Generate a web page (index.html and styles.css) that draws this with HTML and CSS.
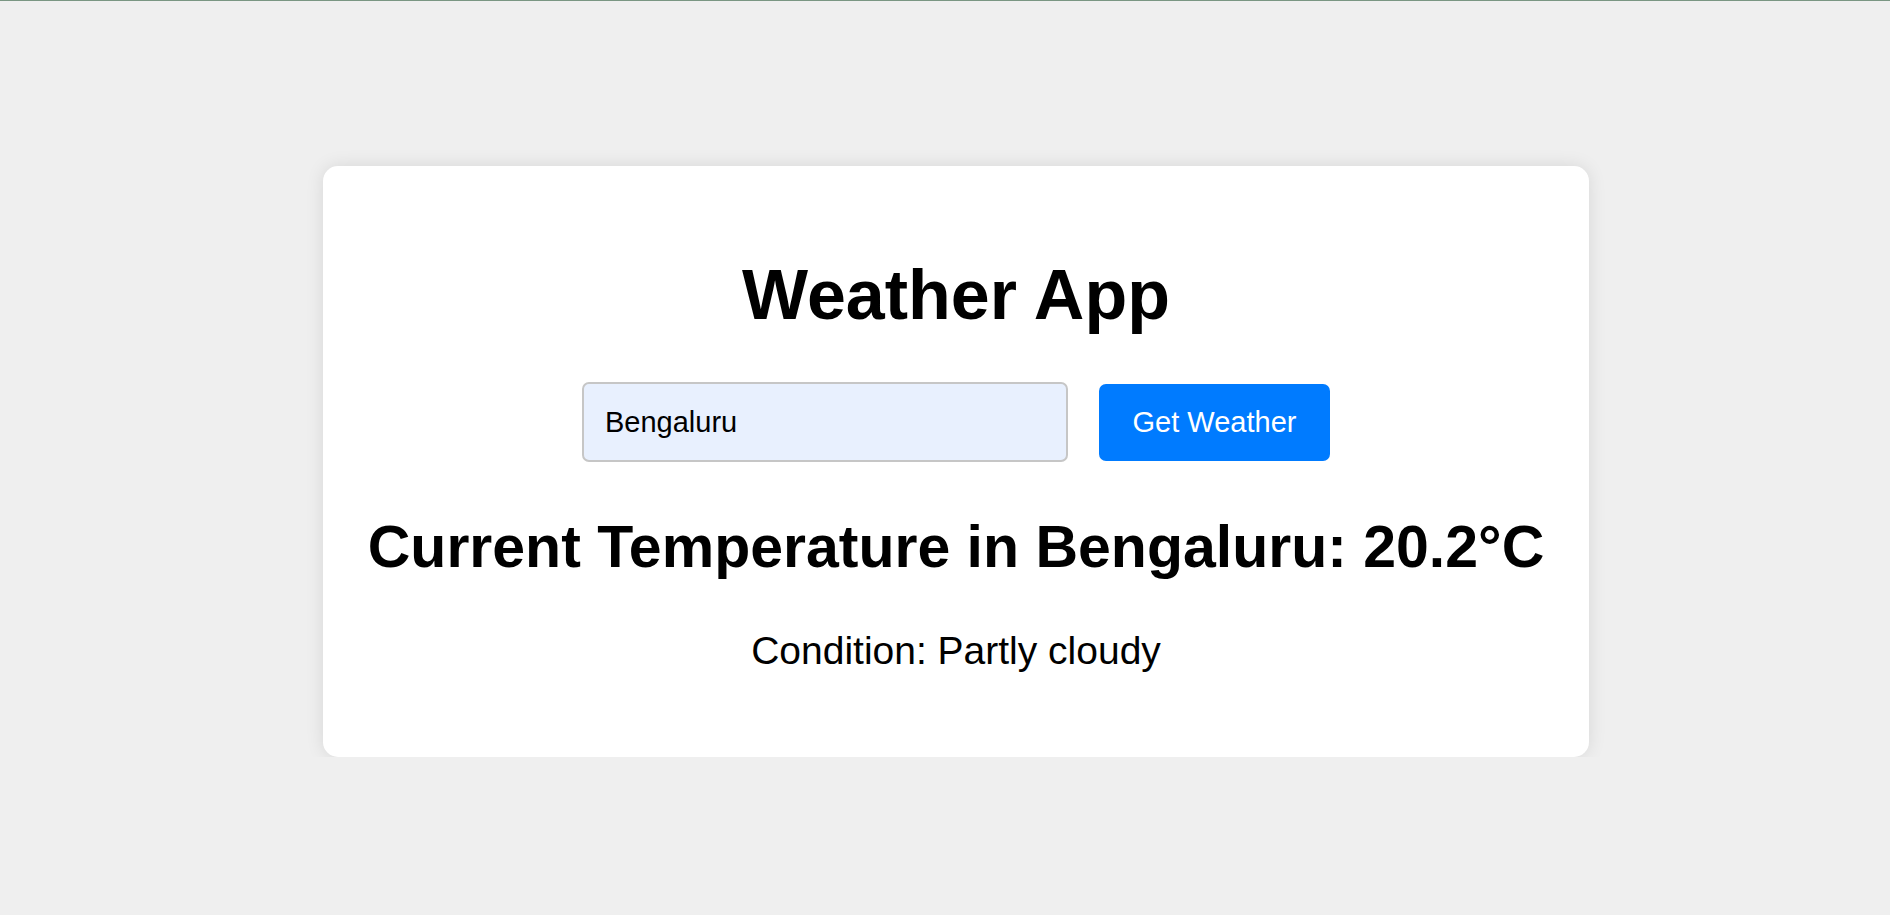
FILE: index.html
```html
<!DOCTYPE html>
<html lang="en">
<head>
<meta charset="utf-8">
<title>Weather App</title>
<link rel="stylesheet" href="styles.css">
</head>
<body>
<main class="page">
  <section class="card">
    <h1 class="title">Weather App</h1>
    <div class="search-row">
      <input class="city-input" type="text" value="Bengaluru">
      <button class="get-btn" type="button">Get Weather</button>
    </div>
    <h2 class="temp">Current Temperature in Bengaluru: 20.2°C</h2>
    <p class="condition">Condition: Partly cloudy</p>
  </section>
</main>
</body>
</html>
```

FILE: styles.css
```css
html, body {
  margin: 0;
  padding: 0;
}

body {
  background: #efefef;
  border-top: 1px solid #7a9683;
  font-family: "Liberation Sans", Arial, sans-serif;
  color: #000;
}

.page {
  display: flex;
  padding: 165px 0 0 323px;
}

.card {
  box-sizing: border-box;
  width: 1266px;
  height: 591px;
  background: #ffffff;
  border-radius: 15px;
  box-shadow: 0 0 18px rgba(0, 0, 0, 0.1);
  padding: 90px 0 0;
  display: flex;
  flex-direction: column;
  align-items: center;
  text-align: center;
}

.title {
  margin: 0;
  font-size: 70px;
  font-weight: bold;
  line-height: 79px;
}

.search-row {
  margin-top: 47px;
  display: flex;
  align-items: center;
  gap: 31px;
}

.city-input {
  box-sizing: border-box;
  width: 486px;
  height: 80px;
  padding: 0 21px;
  border: 2px solid #c6c6c6;
  border-radius: 7px;
  background: #e8f0fe;
  font-family: "Liberation Sans", Arial, sans-serif;
  font-size: 29px;
  color: #000;
  outline: none;
}

.get-btn {
  box-sizing: border-box;
  width: 231px;
  height: 77px;
  padding: 0;
  border: none;
  border-radius: 7px;
  background: #007bff;
  color: #ffffff;
  font-family: "Liberation Sans", Arial, sans-serif;
  font-size: 29px;
  cursor: pointer;
}

.temp {
  margin: 52px 0 0;
  font-size: 59px;
  font-weight: bold;
  line-height: 67px;
}

.condition {
  margin: 47px 0 0;
  font-size: 39px;
  line-height: 45px;
}
```
